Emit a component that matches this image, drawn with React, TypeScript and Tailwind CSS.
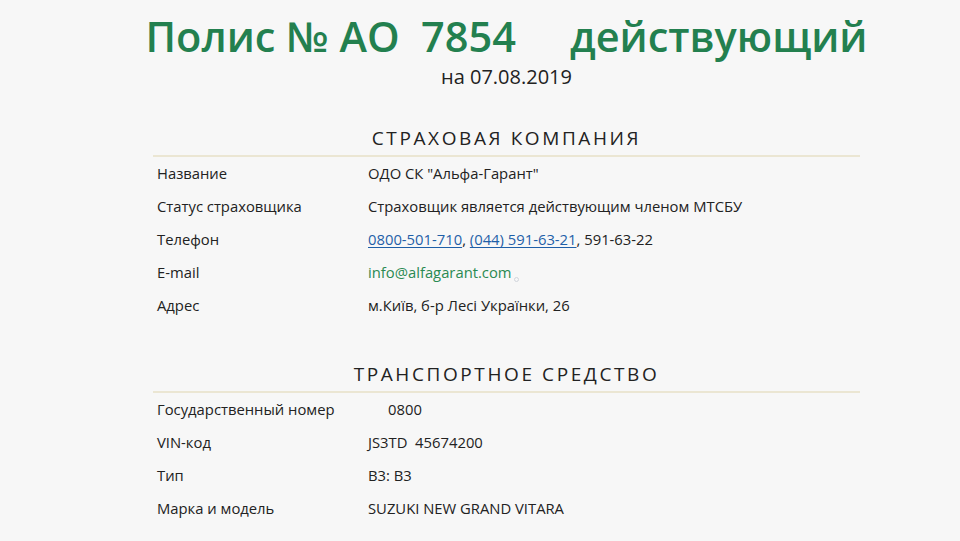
import React from 'react';

type Row = { label: string; value: React.ReactNode };

const company: Row[] = [
  { label: 'Название', value: 'ОДО СК "Альфа-Гарант"' },
  { label: 'Статус страховщика', value: 'Страховщик является действующим членом МТСБУ' },
  {
    label: 'Телефон',
    value: (
      <>
        <a href="#" className="text-[#1f5fa8] underline underline-offset-2">0800-501-710</a>,{' '}
        <a href="#" className="text-[#1f5fa8] underline underline-offset-2">(044) 591-63-21</a>, 591-63-22
      </>
    ),
  },
  {
    label: 'E-mail',
    value: (
      <span className="inline-flex items-end">
        <span className="text-[#2a8a52]">info@alfagarant.com</span>
        <span className="ml-[2px] mb-[2px] inline-block h-[5px] w-[5px] rounded-full border border-gray-300" />
      </span>
    ),
  },
  { label: 'Адрес', value: 'м.Київ, б-р Лесі Українки, 26' },
];

const vehicle: Row[] = [
  { label: 'Государственный номер', value: <span className="pl-5">0800</span> },
  { label: 'VIN-код', value: <span className="whitespace-pre">JS3TD  45674200</span> },
  { label: 'Тип', value: 'B3: B3' },
  { label: 'Марка и модель', value: 'SUZUKI NEW GRAND VITARA' },
];

function Section({ title, rows }: { title: string; rows: Row[] }) {
  return (
    <div>
      <h2 className="text-center text-[19px] font-medium tracking-[2.6px] text-[#222] leading-[22px]">{title}</h2>
      <div className="mt-[6px] h-[2px] bg-[#ebe6d3]" />
      <div>
        {rows.map((r) => (
          <div key={r.label} className="flex h-[33px] items-center text-[14.8px] text-[#222]">
            <div className="w-[215px] pl-1">{r.label}</div>
            <div>{r.value}</div>
          </div>
        ))}
      </div>
    </div>
  );
}

export default function App() {
  return (
    <div className="min-h-screen w-full bg-[#f7f7f7]" style={{ fontFamily: '"Open Sans", "Noto Sans", sans-serif' }}>
      <div className="ml-[153px] w-[707px]">
        <h1 className="-mx-8 pt-[12px] text-center text-[41.5px] font-semibold leading-[48px] text-[#23804f] whitespace-pre">
          {'Полис № АО  7854     действующий'}
        </h1>
        <div className="mt-[5px] text-center text-[20px] font-medium leading-[24px] text-[#222]">на 07.08.2019</div>
        <div className="mt-[38px]">
          <Section title="СТРАХОВАЯ КОМПАНИЯ" rows={company} />
        </div>
        <div className="mt-[41px]">
          <Section title="ТРАНСПОРТНОЕ СРЕДСТВО" rows={vehicle} />
        </div>
      </div>
    </div>
  );
}
